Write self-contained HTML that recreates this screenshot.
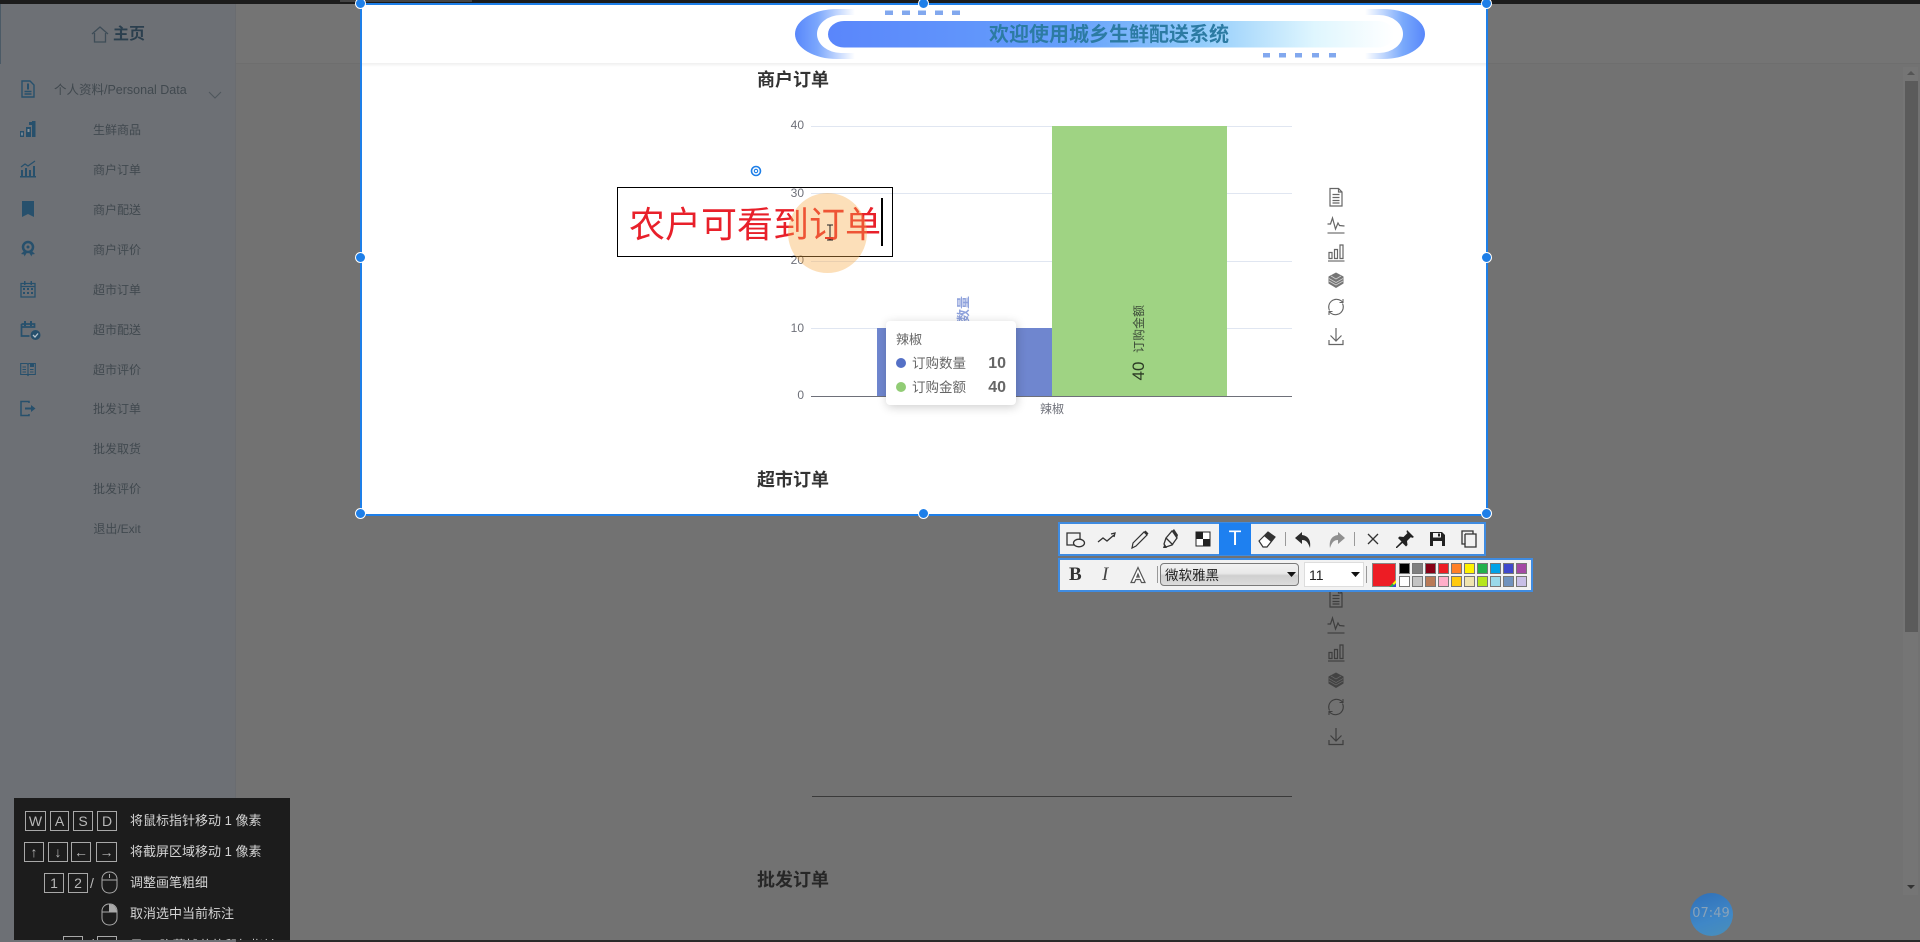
<!DOCTYPE html>
<html lang="zh"><head><meta charset="utf-8"><title>城乡生鲜配送系统</title>
<style>
html,body{margin:0;padding:0;width:1920px;height:942px;overflow:hidden;background:#727272}
*{box-sizing:border-box}
body{font-family:"Liberation Sans","Noto Sans CJK SC",sans-serif;position:relative}
.a{position:absolute}
.t{position:absolute;white-space:nowrap}
.m{position:absolute;left:60px;width:114px;text-align:center;height:20px;line-height:20px;font-size:12px;color:#41494f}
.i{position:absolute;color:#27506c}
.ct{position:absolute;left:757px;font-size:18px;font-weight:700;line-height:24px;height:24px;white-space:nowrap}
.yl{position:absolute;left:780px;width:24px;text-align:right;font-size:12px;color:#6e7079;height:14px;line-height:14px}
.g{position:absolute;left:811px;width:481px;height:1px;background:#e0e6f1}
.k{position:absolute;border:1px solid #a8a8a8;color:#b8b8b8;font-size:14px;text-align:center;height:20px;line-height:18px}
.h{position:absolute;left:130px;color:#d4d4d4;font-size:13px;line-height:18px;height:18px;white-space:nowrap}
.hd{position:absolute;width:11px;height:11px;border-radius:50%;background:#1e7fe8;border:1.5px solid #fff}
.s{position:absolute;width:11px;height:11px;border:1px solid #777}
.ti{position:absolute;top:527px;color:#333}
.ri{position:absolute;left:1324px}
.sp{position:absolute;width:1px;background:#999}
</style></head><body>
<svg width="0" height="0" style="position:absolute"><defs>
<symbol id="rdoc" viewBox="0 0 24 24"><path d="M6 3.500h8.500l3.500 3.500v14H6z M14.500 3.500v3.500h3.500 M8.500 9.500h7 M8.500 12.500h7 M8.500 15.500h7 M8.500 18h7" fill="none" stroke="currentColor" stroke-width="1.200"/></symbol>
<symbol id="rline" viewBox="0 0 24 24"><path d="M3.500 11h3l2-6 3 11 2.500-6 1.500 2.500 5 .5" fill="none" stroke="currentColor" stroke-width="1.200"/><path d="M3.500 20h17" fill="none" stroke="currentColor" stroke-width="1.500" opacity=".75"/></symbol>
<symbol id="rbar" viewBox="0 0 24 24"><path d="M5 12.500h3v6H5z M10.500 9.500h3v9h-3z M16 5h3v13.500h-3z" fill="none" stroke="currentColor" stroke-width="1.200"/><path d="M4 21h16.500" fill="none" stroke="currentColor" stroke-width="1.500" opacity=".75"/></symbol>
<symbol id="rstack" viewBox="0 0 24 24"><path d="M12 4.500l7.500 4v7L12 20l-7.500-4.500v-7z" fill="currentColor" opacity=".9"/><path d="M5 10.500l7 4 7-4 M5 13l7 4 7-4 M7 8l5 3 5-3" fill="none" stroke="#fff" stroke-width=".8" opacity=".65"/></symbol>
<symbol id="rstackd" viewBox="0 0 24 24"><path d="M12 4.500l7.500 4v7L12 20l-7.500-4.500v-7z" fill="currentColor" opacity=".9"/><path d="M5 10.500l7 4 7-4 M5 13l7 4 7-4 M7 8l5 3 5-3" fill="none" stroke="#8a8a8a" stroke-width=".7" opacity=".6"/></symbol>
<symbol id="rsync" viewBox="0 0 24 24"><path d="M5.500 15.500a7.800 7.800 0 0 1 11.500-9.800l1.500 1.300 M18.500 8.500a7.800 7.800 0 0 1-11.500 9.800l-1.500-1.300 M19 4v3.500h-3.500 M5 20v-3.500h3.500" fill="none" stroke="currentColor" stroke-width="1.100"/></symbol>
<symbol id="rdown" viewBox="0 0 24 24"><path d="M12 4v13 M6.500 11.500l5.500 5.500 5.500-5.500 M5 16v4.500h14V16" fill="none" stroke="currentColor" stroke-width="1.200"/></symbol>
</defs></svg>

<!-- background chrome -->
<div class="a" style="left:0;top:0;width:1920px;height:4px;background:#1c1c1c"></div>
<div class="a" style="left:340px;top:0;width:132px;height:2px;background:#444"></div>
<div class="a" style="left:0;top:940px;width:1920px;height:2px;background:#2a2a2a"></div>
<div class="a" style="left:236px;top:4px;width:1684px;height:60px;background:#747474;border-bottom:1px solid #6e6e6e"></div>
<div class="a" style="left:0;top:4px;width:236px;height:938px;background:#6d7075;border-right:1px solid #6a6c70"></div>
<div class="a" style="left:0;top:4px;width:1px;height:60px;background:#4b5a66"></div>

<!-- sidebar -->
<svg class="i" style="left:91px;top:24px;color:#3e4c57" width="18" height="20" viewBox="0 0 18 20"><path d="M1 10L9 3l8 7 M3.500 9v9h11V9" fill="none" stroke="currentColor" stroke-width="1.300"/></svg>
<div class="t" style="left:113px;top:23px;font-size:16px;font-weight:700;color:#2b3f4e;line-height:24px">主页</div>
<div class="t" style="left:54px;top:80px;font-size:12.500px;color:#41494f;line-height:20px">个人资料/Personal Data</div>
<svg class="a" style="left:208px;top:91px" width="14" height="8"><path d="M1 1l6 6 6-6" fill="none" stroke="#4e565c" stroke-width="1"/></svg>
<div class="m" style="top:120px">生鲜商品</div>
<div class="m" style="top:160px">商户订单</div>
<div class="m" style="top:200px">商户配送</div>
<div class="m" style="top:240px">商户评价</div>
<div class="m" style="top:280px">超市订单</div>
<div class="m" style="top:320px">超市配送</div>
<div class="m" style="top:360px">超市评价</div>
<div class="m" style="top:399px">批发订单</div>
<div class="m" style="top:439px">批发取货</div>
<div class="m" style="top:479px">批发评价</div>
<div class="m" style="top:519px">退出/Exit</div>

<svg class="i" style="left:20px;top:80px" width="16" height="18" viewBox="0 0 16 18"><path d="M2 1h8l4 4v12H2z M4.500 14h7 M4.500 11.500h7" fill="none" stroke="currentColor" stroke-width="1.400"/><path d="M7 3.500h2v6H7z" fill="currentColor"/></svg>
<svg class="i" style="left:20px;top:120px" width="16" height="18" viewBox="0 0 16 18"><path d="M0 11h4v6H0z M6 7h5v10H6z M12 1h3.500v16H12z M9 2h3v3H9z" fill="currentColor"/><path d="M1.200 12.500h1.600v3H1.200z M7.500 9h2v3h-2z" fill="#8a9299"/></svg>
<svg class="i" style="left:20px;top:160px" width="16" height="18" viewBox="0 0 16 18"><path d="M1 7l4-3 3 2 7-5" fill="none" stroke="currentColor" stroke-width="1.300"/><path d="M1 10h2v6H1z M5 8h2v8H5z M9 10h2v6H9z M13 6h2v10h-2z M0 16h16v1.500H0z" fill="currentColor"/></svg>
<svg class="i" style="left:21px;top:200px" width="14" height="18" viewBox="0 0 14 18"><path d="M1 1h12v16l-6-3-6 3z" fill="currentColor"/></svg>
<svg class="i" style="left:20px;top:240px" width="16" height="17" viewBox="0 0 16 17"><circle cx="8" cy="7" r="5" fill="none" stroke="currentColor" stroke-width="2.500"/><circle cx="8" cy="7" r="1.500" fill="currentColor"/><path d="M4 11l-3 3 3 .5.5 2 2.500-4 M12 11l3 3-3 .5-.5 2L9 12.500" fill="currentColor"/></svg>
<svg class="i" style="left:20px;top:280px" width="16" height="18" viewBox="0 0 16 18"><path d="M1 3.500h14v13.500H1z M1 3.500h14v3H1z" fill="none" stroke="currentColor" stroke-width="1.300"/><path d="M4 1h1.500v4H4z M10.500 1H12v4h-1.500z M3 8h2v2H3z M7 8h2v2H7z M11 8h2v2h-2z M3 12h2v2H3z M7 12h2v2H7z M11 12h2v2h-2z" fill="currentColor"/></svg>
<svg class="i" style="left:20px;top:320px" width="21" height="21" viewBox="0 0 21 21"><path d="M1.500 4h13v3h-13 M1.500 4v12h8" fill="none" stroke="currentColor" stroke-width="1.700"/><path d="M4 1h2v5H4z M10 1h2v5h-2z" fill="currentColor"/><circle cx="15.500" cy="15" r="5" fill="currentColor"/><path d="M13 15l2 2 3-3.500" fill="none" stroke="#b8c4cc" stroke-width="1.300"/></svg>
<svg class="i" style="left:20px;top:361px" width="16" height="16" viewBox="0 0 16 16"><path d="M.7 2.500h6.500l.8 1 .8-1h6.500v11H8.800l-.8 1-.8-1H.7z M8 3.500v10 M2.500 6h3.500 M2.500 8.500h3.500 M2.500 11h3.500 M10 8.500h3.500 M10 11h3.500" fill="none" stroke="currentColor" stroke-width="1.100"/><path d="M10 2h4v4h-4z" fill="currentColor"/></svg>
<svg class="i" style="left:20px;top:400px" width="16" height="17" viewBox="0 0 16 17"><path d="M9 3V1.500H1v14h8V14" fill="none" stroke="currentColor" stroke-width="1.500"/><path d="M5 7.500h6V5l4.500 3.500L11 12V9.500H5z" fill="currentColor"/></svg>

<!-- scrollbar -->
<div class="a" style="left:1903px;top:67px;width:15px;height:828px;background:#757575"></div>
<div class="a" style="left:1905px;top:81px;width:13px;height:551px;background:#5b5b5b"></div>
<svg class="a" style="left:1906px;top:70px" width="10" height="6"><path d="M1 5h8L5 1z" fill="#555"/></svg>
<svg class="a" style="left:1906px;top:884px" width="10" height="6"><path d="M1 1h8L5 5z" fill="#333"/></svg>

<!-- dim content -->
<div class="ri" style="top:586px;color:#3e3e3e"><svg width="24" height="24"><use href="#rdoc"/></svg></div>
<div class="ri" style="top:613px;color:#3e3e3e"><svg width="24" height="24"><use href="#rline"/></svg></div>
<div class="ri" style="top:640px;color:#3e3e3e"><svg width="24" height="24"><use href="#rbar"/></svg></div>
<div class="ri" style="top:668px;color:#3e3e3e"><svg width="24" height="24"><use href="#rstackd"/></svg></div>
<div class="ri" style="top:695px;color:#3e3e3e"><svg width="24" height="24"><use href="#rsync"/></svg></div>
<div class="ri" style="top:724px;color:#3e3e3e"><svg width="24" height="24"><use href="#rdown"/></svg></div>
<div class="a" style="left:812px;top:796px;width:480px;height:1px;background:#3a3a3a"></div>
<div class="ct" style="top:868px;color:#272727">批发订单</div>

<!-- timer -->
<div class="a" style="left:1690px;top:893px;width:43px;height:43px;border-radius:50%;background:linear-gradient(160deg,#2f6fb8,#3f87c7 60%,#4a8fb8)"></div>
<div class="t" style="left:1689px;top:905px;width:44px;text-align:center;font-size:13px;color:#88a2b9;line-height:18px;font-family:'DejaVu Sans',sans-serif">07:49</div>

<!-- selection bright region -->
<div class="a" style="left:361px;top:4px;width:1125px;height:510px;background:#fff;overflow:hidden"></div>
<div class="a" style="left:361px;top:63px;width:1125px;height:4px;background:linear-gradient(#efefef,#fff)"></div>

<!-- banner -->
<svg class="a" style="left:790px;top:5px" width="640" height="58" viewBox="790 5 640 58">
<defs>
<linearGradient id="b1" x1="795" x2="1425" y1="0" y2="0" gradientUnits="userSpaceOnUse"><stop offset="0" stop-color="#5887fb"/><stop offset=".035" stop-color="#7aa6fc"/><stop offset=".095" stop-color="#fff"/><stop offset=".905" stop-color="#fff"/><stop offset=".965" stop-color="#79a9fb"/><stop offset="1" stop-color="#5887fb"/></linearGradient>
<linearGradient id="b2" x1="828" x2="1394" y1="0" y2="0" gradientUnits="userSpaceOnUse"><stop offset="0" stop-color="#5a86fb"/><stop offset=".42" stop-color="#659ffb"/><stop offset=".66" stop-color="#92ccfb"/><stop offset=".86" stop-color="#dff6fe"/><stop offset="1" stop-color="#fff"/></linearGradient>
</defs>
<rect x="795" y="9" width="630" height="50" rx="42" ry="25" fill="url(#b1)"/>
<rect x="817" y="15" width="586" height="38" rx="24" ry="19" fill="#fff"/>
<rect x="828" y="21" width="566" height="26.500" rx="16" ry="13.250" fill="url(#b2)"/>
<g fill="#5f90ea" opacity=".78"><rect x="885" y="10.500" width="8" height="4.500"/><rect x="902" y="10.500" width="8" height="4.500"/><rect x="918" y="10.500" width="8" height="4.500"/><rect x="935" y="10.500" width="8" height="4.500"/><rect x="952" y="10.500" width="8" height="4.500"/>
<rect x="1263" y="53" width="7" height="4.500"/><rect x="1279" y="53" width="7" height="4.500"/><rect x="1295" y="53" width="7" height="4.500"/><rect x="1312" y="53" width="7" height="4.500"/><rect x="1329" y="53" width="7" height="4.500"/></g>
</svg>
<div class="t" style="left:989px;top:21px;font-size:20px;font-weight:700;color:#2c7ba3;line-height:28px">欢迎使用城乡生鲜配送系统</div>

<!-- chart -->
<div class="ct" style="top:68px;color:#333">商户订单</div>
<div class="g" style="top:126px"></div><div class="g" style="top:193px"></div><div class="g" style="top:261px"></div><div class="g" style="top:328px"></div>
<div class="yl" style="top:118px">40</div><div class="yl" style="top:186px">30</div><div class="yl" style="top:253px">20</div><div class="yl" style="top:321px">10</div><div class="yl" style="top:388px">0</div>
<div class="a" style="left:877px;top:328px;width:175px;height:68px;background:#6f86cf"></div>
<div class="a" style="left:1052px;top:126px;width:175px;height:270px;background:#9fd383"></div>
<div class="a" style="left:811px;top:396px;width:481px;height:1px;background:#6e7079"></div>
<div class="t" style="left:1032px;top:400px;width:40px;text-align:center;font-size:12px;color:#6e7079;line-height:18px">辣椒</div>
<div class="t" style="left:940px;top:316px;width:48px;height:16px;line-height:16px;font-size:13px;font-weight:700;color:#8fa2dc;text-align:center;transform:rotate(-90deg);transform-origin:center">订购数量</div>
<div class="t" style="left:1115px;top:321px;width:48px;height:16px;line-height:16px;font-size:12px;color:#3c4a38;text-align:center;transform:rotate(-90deg)">订购金额</div>
<div class="t" style="left:1126px;top:362px;width:26px;height:18px;line-height:18px;font-size:17px;color:#2b3a24;text-align:center;transform:rotate(-90deg)">40</div>

<!-- tooltip -->
<div class="a" style="left:886px;top:321px;width:130px;height:84px;background:#fff;border-radius:4px;box-shadow:1px 2px 10px rgba(0,0,0,.2)"></div>
<div class="t" style="left:896px;top:331px;font-size:13px;color:#666;line-height:18px">辣椒</div>
<div class="a" style="left:896px;top:358px;width:10px;height:10px;border-radius:50%;background:#5470c6"></div>
<div class="t" style="left:912px;top:355px;font-size:13.500px;color:#666;line-height:18px">订购数量</div>
<div class="t" style="left:980px;top:355px;width:26px;text-align:right;font-size:16px;font-weight:700;color:#666;line-height:18px">10</div>
<div class="a" style="left:896px;top:382px;width:10px;height:10px;border-radius:50%;background:#91cc75"></div>
<div class="t" style="left:912px;top:379px;font-size:13.500px;color:#666;line-height:18px">订购金额</div>
<div class="t" style="left:980px;top:379px;width:26px;text-align:right;font-size:16px;font-weight:700;color:#666;line-height:18px">40</div>

<div class="ri" style="top:185px;color:#666"><svg width="24" height="24"><use href="#rdoc"/></svg></div>
<div class="ri" style="top:213px;color:#666"><svg width="24" height="24"><use href="#rline"/></svg></div>
<div class="ri" style="top:240px;color:#666"><svg width="24" height="24"><use href="#rbar"/></svg></div>
<div class="ri" style="top:268px;color:#666"><svg width="24" height="24"><use href="#rstack"/></svg></div>
<div class="ri" style="top:295px;color:#666"><svg width="24" height="24"><use href="#rsync"/></svg></div>
<div class="ri" style="top:324px;color:#666"><svg width="24" height="24"><use href="#rdown"/></svg></div>

<div class="ct" style="top:468px;color:#333">超市订单</div>

<!-- annotation text box -->
<div class="a" style="left:617px;top:187px;width:276px;height:70px;border:1px solid #000"></div>
<div class="t" style="left:629px;top:201px;font-size:36px;color:#e8202a;line-height:48px">农户可看到订单</div>
<div class="a" style="left:881px;top:198px;width:1.500px;height:48px;background:#000"></div>
<div class="a" style="left:788px;top:193px;width:79px;height:80px;border-radius:50%;background:rgba(247,170,70,.38)"></div>
<svg class="a" style="left:825px;top:224px" width="10" height="18"><path d="M2 1h6M5 1v15M2 16h6" fill="none" stroke="#222" stroke-width="1"/></svg>
<div class="a" style="left:825px;top:237px;width:8px;height:2px;background:#e8402a"></div>
<svg class="a" style="left:750px;top:165px" width="12" height="12" viewBox="0 0 12 12"><circle cx="6" cy="6" r="4.500" fill="none" stroke="#1e7fe8" stroke-width="1.600"/><circle cx="6" cy="6" r="1.700" fill="none" stroke="#1e7fe8" stroke-width="1.100"/></svg>

<!-- selection border -->
<div class="a" style="left:360px;top:3px;width:1128px;height:513px;border:2.500px solid #1e7fe8"></div>
<div class="hd" style="left:355px;top:-2px"></div><div class="hd" style="left:918px;top:-2px"></div><div class="hd" style="left:1481px;top:-2px"></div>
<div class="hd" style="left:355px;top:252px"></div><div class="hd" style="left:1481px;top:252px"></div>
<div class="hd" style="left:355px;top:508px"></div><div class="hd" style="left:918px;top:508px"></div><div class="hd" style="left:1481px;top:508px"></div>

<!-- toolbar 1 -->
<div class="a" style="left:1058px;top:522px;width:428px;height:34px;background:#f2f2f2;border:2px solid #3f8be0"></div>
<div class="a" style="left:1219px;top:523px;width:32px;height:32px;background:#1e80f0"></div>
<svg class="ti" style="left:1063px" width="24" height="24" viewBox="0 0 24 24"><path d="M4 6h13v12H4z" fill="none" stroke="#333" stroke-width="1.300"/><ellipse cx="16" cy="16" rx="5.500" ry="3.800" fill="#f2f2f2" stroke="#333" stroke-width="1.300"/></svg>
<svg class="ti" style="left:1095px" width="24" height="24" viewBox="0 0 24 24"><path d="M3 15l5-4 4 3 7-6 M16 7l4-1-1 4" fill="none" stroke="#333" stroke-width="1.300"/></svg>
<svg class="ti" style="left:1127px" width="24" height="24" viewBox="0 0 24 24"><path d="M5 21l1-5L17 5l3 3L9 19z" fill="none" stroke="#333" stroke-width="1.200"/><path d="M17 5l1.500-1.500 3 3L20 8z" fill="#333"/></svg>
<svg class="ti" style="left:1159px" width="24" height="24" viewBox="0 0 24 24"><path d="M7 11l6-7 1 1 4 6-5 7-6 2-2-3z M7 11l7 7" fill="none" stroke="#333" stroke-width="1.300"/><path d="M13 4l2-2 4 6-1 3z M5 18l3 3H4z" fill="#333"/></svg>
<svg class="ti" style="left:1191px" width="24" height="24" viewBox="0 0 24 24"><rect x="5" y="5" width="14" height="14" fill="#fff" stroke="#222"/><rect x="5" y="5" width="7" height="7" fill="#222"/><rect x="12" y="12" width="7" height="7" fill="#222"/></svg>
<div class="t" style="left:1219px;top:527px;width:32px;text-align:center;color:#fff;font-size:21px;line-height:24px">T</div>
<svg class="ti" style="left:1255px" width="24" height="24" viewBox="0 0 24 24"><path d="M4 14l9-9 7 5-8 10H8z" fill="#fff" stroke="#333" stroke-width="1.200"/><path d="M13 5l7 5-4 5-7-6z" fill="#333"/></svg>
<div class="sp" style="left:1285px;top:532px;height:14px"></div>
<svg class="ti" style="left:1292px" width="24" height="24" viewBox="0 0 24 24"><path d="M10 5L3 11l7 6v-4c4 0 6 2 8 8 1-7-1-12-8-13z" fill="#2c2c2c"/></svg>
<svg class="ti" style="left:1324px" width="24" height="24" viewBox="0 0 24 24"><path d="M14 5l7 6-7 6v-4c-4 0-6 2-8 8-1-7 1-12 8-13z" fill="#8f8f8f"/></svg>
<div class="sp" style="left:1354px;top:532px;height:14px"></div>
<svg class="ti" style="left:1361px" width="24" height="24" viewBox="0 0 24 24"><path d="M7 7l10 10M17 7L7 17" stroke="#333" stroke-width="1.300" fill="none"/></svg>
<svg class="ti" style="left:1393px" width="24" height="24" viewBox="0 0 24 24"><path d="M14 3l7 7-2 1-1-1-4 4 .5 4-1.500 1.500-3.500-3.500L4 21l-1 0 0-1 5.500-5.500L5 11l1.500-1.500 4 .5 4-4-1-1z" fill="#222"/></svg>
<svg class="ti" style="left:1425px" width="24" height="24" viewBox="0 0 24 24"><path d="M5 5h12l3 3v11H5z" fill="#222"/><path d="M8 6h8v4.500H8z M8 14h9v5H8z" fill="#f2f2f2"/><path d="M13 6.500h2v3h-2z" fill="#222"/></svg>
<svg class="ti" style="left:1457px" width="24" height="24" viewBox="0 0 24 24"><path d="M5 4h11v3h3v13H8v-3H5z M8 7h8" fill="none" stroke="#333" stroke-width="1.300"/><path d="M8 7v10" stroke="#333" stroke-width="1.300"/></svg>

<!-- toolbar 2 -->
<div class="a" style="left:1058px;top:558px;width:475px;height:34px;background:#f2f2f2;border:2px solid #3f8be0"></div>
<div class="t" style="left:1069px;top:563px;font-family:'Liberation Serif',serif;font-weight:700;font-size:19px;color:#333;line-height:24px">B</div>
<div class="t" style="left:1102px;top:563px;font-family:'Liberation Serif',serif;font-style:italic;font-size:19px;color:#444;line-height:24px">I</div>
<svg class="a" style="left:1130px;top:566px" width="16" height="18" viewBox="0 0 16 18"><path d="M1 16.500L8 1.500l7 15h-3.500l-1.300-3H5.800l-1.300 3z M6.800 11h2.400L8 8z" fill="#fff" stroke="#555" stroke-width="1.200"/></svg>
<div class="sp" style="left:1157px;top:566px;height:17px"></div>
<div class="a" style="left:1160px;top:563px;width:139px;height:23px;border:1px solid #7a7a7a;border-radius:4px;background:linear-gradient(#f2f2f2,#e8e8e8 45%,#cfcfcf 55%,#dcdcdc)"></div>
<div class="t" style="left:1165px;top:565px;font-size:13.500px;color:#222;line-height:21px">微软雅黑</div>
<svg class="a" style="left:1287px;top:572px" width="9" height="6"><path d="M0 0h9L4.500 5z" fill="#111"/></svg>
<div class="a" style="left:1304px;top:562px;width:60px;height:25px;background:#fff;border:1px solid #ddd"></div>
<div class="t" style="left:1309px;top:565px;font-size:14px;color:#222;line-height:21px">11</div>
<svg class="a" style="left:1351px;top:572px" width="9" height="6"><path d="M0 0h9L4.500 5z" fill="#111"/></svg>
<div class="sp" style="left:1366px;top:566px;height:17px"></div>
<div class="a" style="left:1372px;top:563px;width:24px;height:24px;background:#ed1c24;border:1px solid #888"></div>
<svg class="a" style="left:1389px;top:580px" width="7" height="7"><path d="M7 0v7H0z" fill="#1fb14c"/><path d="M7 3v4H3z" fill="#3f48cc"/><path d="M7 0L3.500 3.500 5 5 7 3z" fill="#fff200"/></svg>
<div class="s" style="left:1399px;top:563px;background:#000"></div>
<div class="s" style="left:1412px;top:563px;background:#7f7f7f"></div>
<div class="s" style="left:1425px;top:563px;background:#880015"></div>
<div class="s" style="left:1438px;top:563px;background:#ed1c24"></div>
<div class="s" style="left:1451px;top:563px;background:#ff7f27"></div>
<div class="s" style="left:1464px;top:563px;background:#fff200"></div>
<div class="s" style="left:1477px;top:563px;background:#22b14c"></div>
<div class="s" style="left:1490px;top:563px;background:#00a2e8"></div>
<div class="s" style="left:1503px;top:563px;background:#3f48cc"></div>
<div class="s" style="left:1516px;top:563px;background:#a349a4"></div>
<div class="s" style="left:1399px;top:576px;background:#fff"></div>
<div class="s" style="left:1412px;top:576px;background:#c3c3c3"></div>
<div class="s" style="left:1425px;top:576px;background:#b97a57"></div>
<div class="s" style="left:1438px;top:576px;background:#ffaec9"></div>
<div class="s" style="left:1451px;top:576px;background:#ffc90e"></div>
<div class="s" style="left:1464px;top:576px;background:#efe4b0"></div>
<div class="s" style="left:1477px;top:576px;background:#b5e61d"></div>
<div class="s" style="left:1490px;top:576px;background:#99d9ea"></div>
<div class="s" style="left:1503px;top:576px;background:#7092be"></div>
<div class="s" style="left:1516px;top:576px;background:#c8bfe7"></div>

<!-- help panel -->
<div class="a" style="left:14px;top:798px;width:276px;height:142px;background:#1c1c1c;overflow:hidden">
<div class="k" style="left:11px;top:13px;width:21px">W</div><div class="k" style="left:36px;top:13px;width:19px">A</div><div class="k" style="left:59px;top:13px;width:20px">S</div><div class="k" style="left:83px;top:13px;width:20px">D</div>
<div class="h" style="left:116px;top:14px">将鼠标指针移动 1 像素</div>
<div class="k" style="left:10px;top:44px;width:20px;font-weight:700">↑</div><div class="k" style="left:34px;top:44px;width:20px;font-weight:700">↓</div><div class="k" style="left:57px;top:44px;width:20px">←</div><div class="k" style="left:82px;top:44px;width:21px">→</div>
<div class="h" style="left:116px;top:45px">将截屏区域移动 1 像素</div>
<div class="k" style="left:30px;top:75px;width:20px">1</div><div class="k" style="left:54px;top:75px;width:20px">2</div>
<div class="t" style="left:76px;top:75px;color:#bbb;font-size:14px;line-height:20px">/</div>
<svg class="a" style="left:87px;top:73px" width="17" height="23" viewBox="0 0 17 23"><rect x="1" y="1" width="15" height="21" rx="7" fill="none" stroke="#aaa"/><path d="M1 9h15 M8.500 3v4" stroke="#aaa"/></svg>
<div class="h" style="left:116px;top:76px">调整画笔粗细</div>
<svg class="a" style="left:87px;top:105px" width="17" height="23" viewBox="0 0 17 23"><rect x="1" y="1" width="15" height="21" rx="7" fill="none" stroke="#aaa"/><path d="M1 9h15 M8.500 1v8" stroke="#aaa"/><path d="M9 1.500c4 0 6.500 3 6.500 7H9z" fill="#aaa"/></svg>
<div class="h" style="left:116px;top:107px">取消选中当前标注</div>
<div class="k" style="left:49px;top:138px;width:20px">&gt;</div><div class="t" style="left:76px;top:136px;color:#bbb;font-size:14px;line-height:20px">/</div><div class="k" style="left:83px;top:138px;width:20px">+</div>
<div class="h" style="left:116px;top:139px">显示/隐藏捕获的鼠标指针</div>
</div>
</body></html>
